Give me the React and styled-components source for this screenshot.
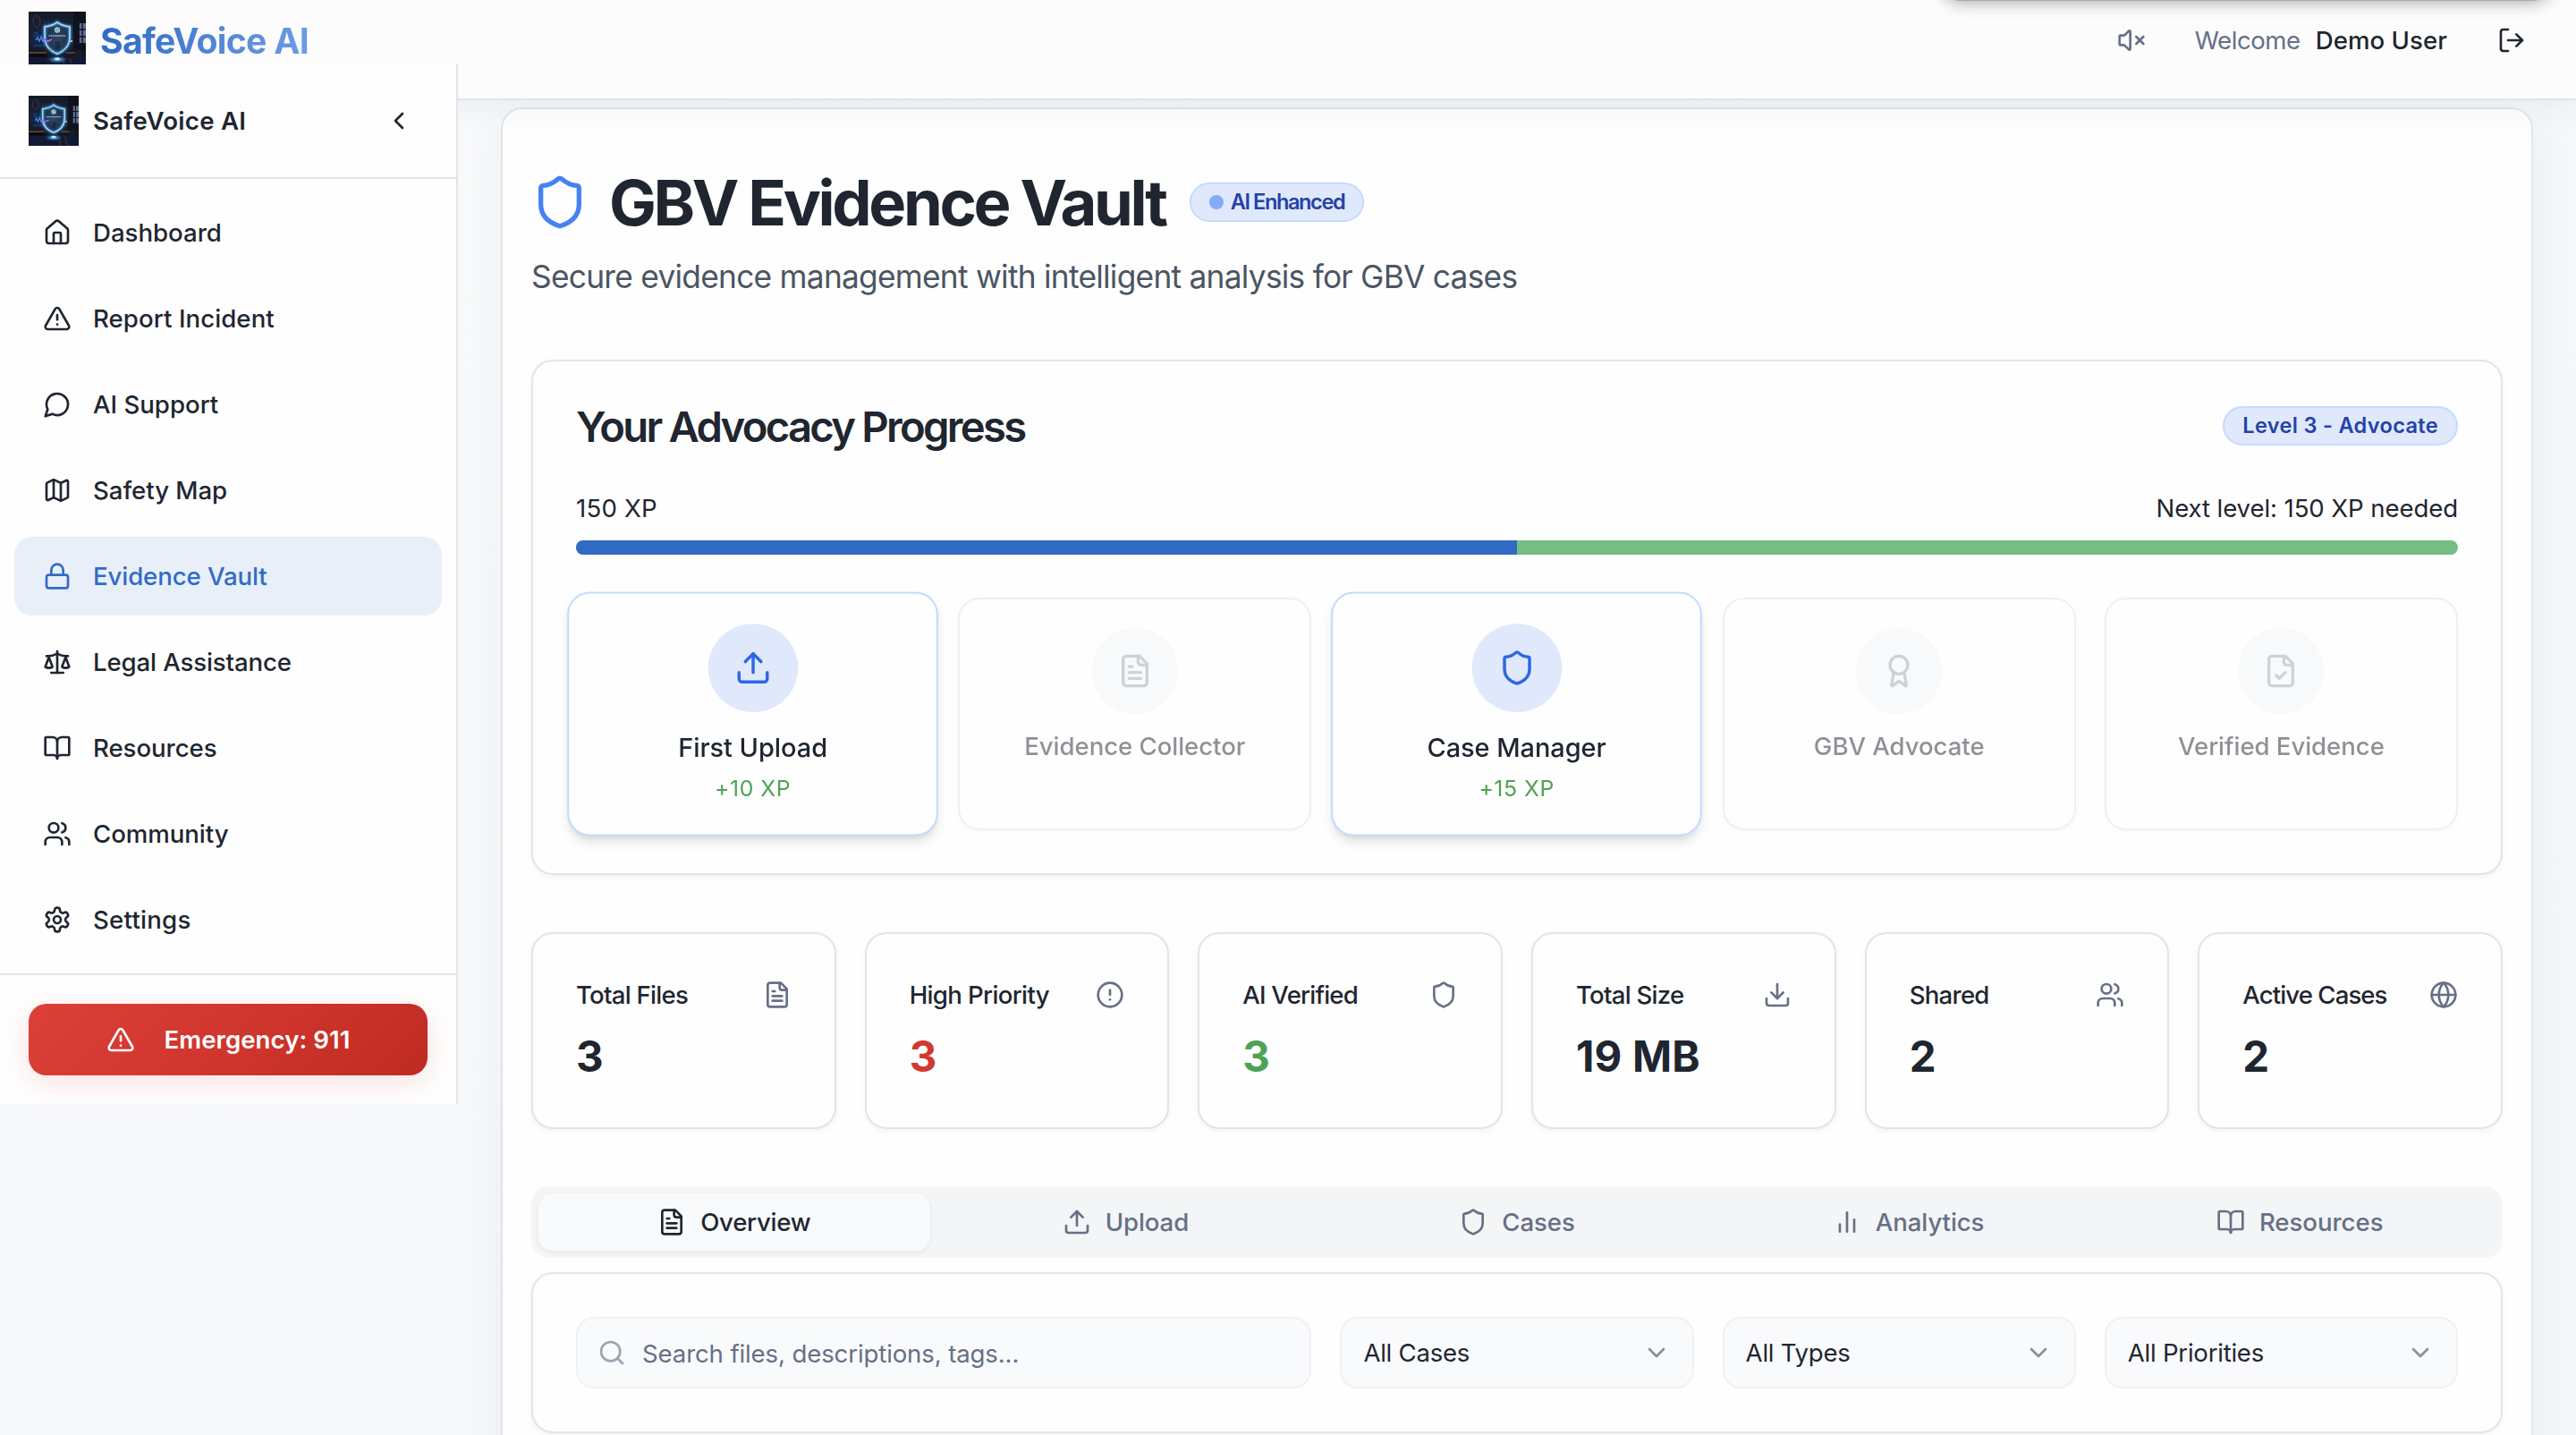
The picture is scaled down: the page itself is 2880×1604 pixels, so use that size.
import React from 'react';
import styled, { createGlobalStyle, css } from 'styled-components';

const GlobalStyle = createGlobalStyle`
  *, *::before, *::after { box-sizing: border-box; }
  html, body { margin: 0; padding: 0; }
  body {
    font-family: Inter, Roboto, "Liberation Sans", sans-serif;
    color: #1f2630;
    background: #f8fafc;
    overflow: hidden;
  }
  h1, h2, p { margin: 0; }
  button, input { font: inherit; color: inherit; }
`;

/* ---------- type scale ---------- */

const regular = 420;
const medium = 540;

const body = css`
  font-size: 27.6px;
  font-weight: ${regular};
  line-height: 40px;
  white-space: nowrap;
  letter-spacing: ${(p) => p.$ls ?? 0}px;
`;

const small = css`
  font-size: 23.6px;
  line-height: 32px;
  white-space: nowrap;
  letter-spacing: ${(p) => p.$ls ?? 0.3}px;
`;

/* ---------- icons ---------- */

const Glyph = styled.svg.attrs({ viewBox: '0 0 24 24', 'aria-hidden': true })`
  flex: none;
  width: ${(p) => p.$size || 32}px;
  height: ${(p) => p.$size || 32}px;
  fill: none;
  stroke: ${(p) => p.$color || 'currentColor'};
  stroke-width: 2;
  stroke-linecap: round;
  stroke-linejoin: round;
  opacity: ${(p) => p.$opacity ?? 1};
`;

const shapes = {
  home: (
    <>
      <path d="M15 21v-8a1 1 0 0 0-1-1h-4a1 1 0 0 0-1 1v8" />
      <path d="M3 10a2 2 0 0 1 .709-1.528l7-5.999a2 2 0 0 1 2.582 0l7 5.999A2 2 0 0 1 21 10v9a2 2 0 0 1-2 2H5a2 2 0 0 1-2-2z" />
    </>
  ),
  alert: (
    <>
      <path d="m21.73 18-8-14a2 2 0 0 0-3.48 0l-8 14A2 2 0 0 0 4 21h16a2 2 0 0 0 1.73-3" />
      <path d="M12 9v4" />
      <path d="M12 17h.01" />
    </>
  ),
  chat: <path d="M7.9 20A9 9 0 1 0 4 16.1L2 22Z" />,
  map: (
    <>
      <path d="M14.106 5.553a2 2 0 0 0 1.788 0l3.659-1.83A1 1 0 0 1 21 4.619v12.764a1 1 0 0 1-.553.894l-4.553 2.277a2 2 0 0 1-1.788 0l-4.212-2.106a2 2 0 0 0-1.788 0l-3.659 1.83A1 1 0 0 1 3 19.381V6.618a1 1 0 0 1 .553-.894l4.553-2.277a2 2 0 0 1 1.788 0z" />
      <path d="M15 5.764v15" />
      <path d="M9 3.236v15" />
    </>
  ),
  lock: (
    <>
      <rect width="18" height="11" x="3" y="11" rx="2" ry="2" />
      <path d="M7 11V7a5 5 0 0 1 10 0v4" />
    </>
  ),
  scale: (
    <>
      <path d="m16 16 3-8 3 8c-.87.65-1.92 1-3 1s-2.13-.35-3-1Z" />
      <path d="m2 16 3-8 3 8c-.87.65-1.92 1-3 1s-2.13-.35-3-1Z" />
      <path d="M7 21h10" />
      <path d="M12 3v18" />
      <path d="M3 7h2c2 0 5-1 7-2 2 1 5 2 7 2h2" />
    </>
  ),
  book: (
    <>
      <path d="M12 7v14" />
      <path d="M3 18a1 1 0 0 1-1-1V4a1 1 0 0 1 1-1h5a4 4 0 0 1 4 4 4 4 0 0 1 4-4h5a1 1 0 0 1 1 1v13a1 1 0 0 1-1 1h-6a3 3 0 0 0-3 3 3 3 0 0 0-3-3z" />
    </>
  ),
  users: (
    <>
      <path d="M16 21v-2a4 4 0 0 0-4-4H6a4 4 0 0 0-4 4v2" />
      <circle cx="9" cy="7" r="4" />
      <path d="M22 21v-2a4 4 0 0 0-3-3.87" />
      <path d="M16 3.13a4 4 0 0 1 0 7.75" />
    </>
  ),
  settings: (
    <>
      <path d="M12.22 2h-.44a2 2 0 0 0-2 2v.18a2 2 0 0 1-1 1.73l-.43.25a2 2 0 0 1-2 0l-.15-.08a2 2 0 0 0-2.73.73l-.22.38a2 2 0 0 0 .73 2.73l.15.1a2 2 0 0 1 1 1.72v.51a2 2 0 0 1-1 1.74l-.15.09a2 2 0 0 0-.73 2.73l.22.38a2 2 0 0 0 2.73.73l.15-.08a2 2 0 0 1 2 0l.43.25a2 2 0 0 1 1 1.73V20a2 2 0 0 0 2 2h.44a2 2 0 0 0 2-2v-.18a2 2 0 0 1 1-1.73l.43-.25a2 2 0 0 1 2 0l.15.08a2 2 0 0 0 2.73-.73l.22-.39a2 2 0 0 0-.73-2.73l-.15-.08a2 2 0 0 1-1-1.74v-.5a2 2 0 0 1 1-1.74l.15-.09a2 2 0 0 0 .73-2.73l-.22-.38a2 2 0 0 0-2.73-.73l-.15.08a2 2 0 0 1-2 0l-.43-.25a2 2 0 0 1-1-1.73V4a2 2 0 0 0-2-2z" />
      <circle cx="12" cy="12" r="3" />
    </>
  ),
  left: <path d="m15 18-6-6 6-6" />,
  down: <path d="m6 9 6 6 6-6" />,
  mute: (
    <>
      <path d="M11 4.702a.705.705 0 0 0-1.203-.498L6.413 7.587A1.4 1.4 0 0 1 5.416 8H3a1 1 0 0 0-1 1v6a1 1 0 0 0 1 1h2.416a1.4 1.4 0 0 1 .997.413l3.383 3.384A.705.705 0 0 0 11 19.298z" />
      <path d="m22 9-6 6" />
      <path d="m16 9 6 6" />
    </>
  ),
  logout: (
    <>
      <path d="M9 21H5a2 2 0 0 1-2-2V5a2 2 0 0 1 2-2h4" />
      <path d="m16 17 5-5-5-5" />
      <path d="M21 12H9" />
    </>
  ),
  shield: (
    <path d="M20 13c0 5-3.5 7.5-7.66 8.95a1 1 0 0 1-.67-.01C7.5 20.5 4 18 4 13V6a1 1 0 0 1 1-1c2 0 4.5-1.2 6.24-2.72a1.17 1.17 0 0 1 1.52 0C14.51 3.81 17 5 19 5a1 1 0 0 1 1 1z" />
  ),
  upload: (
    <>
      <path d="M21 15v4a2 2 0 0 1-2 2H5a2 2 0 0 1-2-2v-4" />
      <path d="m17 8-5-5-5 5" />
      <path d="M12 3v12" />
    </>
  ),
  download: (
    <>
      <path d="M21 15v4a2 2 0 0 1-2 2H5a2 2 0 0 1-2-2v-4" />
      <path d="m7 10 5 5 5-5" />
      <path d="M12 15V3" />
    </>
  ),
  file: (
    <>
      <path d="M15 2H6a2 2 0 0 0-2 2v16a2 2 0 0 0 2 2h12a2 2 0 0 0 2-2V7Z" />
      <path d="M14 2v4a2 2 0 0 0 2 2h4" />
      <path d="M10 9H8" />
      <path d="M16 13H8" />
      <path d="M16 17H8" />
    </>
  ),
  fileCheck: (
    <>
      <path d="M15 2H6a2 2 0 0 0-2 2v16a2 2 0 0 0 2 2h12a2 2 0 0 0 2-2V7Z" />
      <path d="M14 2v4a2 2 0 0 0 2 2h4" />
      <path d="m9 15 2 2 4-4" />
    </>
  ),
  award: (
    <>
      <path d="m15.477 12.89 1.515 8.526a.5.5 0 0 1-.81.47l-3.58-2.687a1 1 0 0 0-1.197 0l-3.586 2.686a.5.5 0 0 1-.81-.469l1.514-8.526" />
      <circle cx="12" cy="8" r="6" />
    </>
  ),
  info: (
    <>
      <circle cx="12" cy="12" r="10" />
      <path d="M12 8v4" />
      <path d="M12 16h.01" />
    </>
  ),
  globe: (
    <>
      <circle cx="12" cy="12" r="10" />
      <path d="M12 2a14.5 14.5 0 0 0 0 20 14.5 14.5 0 0 0 0-20" />
      <path d="M2 12h20" />
    </>
  ),
  bars: (
    <>
      <path d="M18 20V10" />
      <path d="M12 20V4" />
      <path d="M6 20v-6" />
    </>
  ),
  search: (
    <>
      <circle cx="11" cy="11" r="8" />
      <path d="m21 21-4.3-4.3" />
    </>
  ),
};

const Icon = ({ name, size, color, opacity }) => (
  <Glyph $size={size} $color={color} $opacity={opacity}>
    {shapes[name]}
  </Glyph>
);

/* ---------- logo ---------- */

const LogoArt = styled.svg.attrs({ viewBox: '0 0 64 64' })`
  flex: none;
  display: block;
  width: ${(p) => p.$size}px;
  height: ${(p) => p.$size}px;
`;

const shieldPath = 'M32 11.8C28.5 14.8 23 16.2 18 16.8V29C18 37.5 24 44 32 47.2C40 44 46 37.5 46 29V16.8C41 16.2 35.5 14.8 32 11.8Z';

const Logo = ({ size, id }) => (
  <LogoArt $size={size}>
    <defs>
      <linearGradient id={`${id}-wall`} x1="0" y1="0" x2="0" y2="1">
        <stop offset="0" stopColor="#161a2a" />
        <stop offset="0.5" stopColor="#1b2238" />
        <stop offset="0.72" stopColor="#17161f" />
        <stop offset="1" stopColor="#0d1630" />
      </linearGradient>
      <radialGradient id={`${id}-halo`}>
        <stop offset="0" stopColor="#3f6f9c" stopOpacity="0.75" />
        <stop offset="1" stopColor="#24406a" stopOpacity="0" />
      </radialGradient>
      <radialGradient id={`${id}-base`}>
        <stop offset="0" stopColor="#e4fbff" />
        <stop offset="0.3" stopColor="#58b8f2" stopOpacity="0.8" />
        <stop offset="1" stopColor="#1c4fa0" stopOpacity="0" />
      </radialGradient>
      <filter id={`${id}-soft`} x="-20%" y="-20%" width="140%" height="140%">
        <feGaussianBlur stdDeviation="1.3" />
      </filter>
      <clipPath id={`${id}-clip`}>
        <rect width="64" height="64" />
      </clipPath>
    </defs>
    <g clipPath={`url(#${id}-clip)`}>
      <rect width="64" height="64" fill={`url(#${id}-wall)`} />
      <rect x="50" width="14" height="44" fill="#0c0e16" opacity="0.7" />
      <ellipse cx="9" cy="11" rx="4" ry="6.4" fill="#1a1d2b" stroke="#3a3f52" strokeWidth="1" />
      <path d="M18 10v7M22 9v5" stroke="#2f3448" strokeWidth="1.2" />
      <rect x="5" y="21" width="16" height="19" fill="#122544" />
      <path d="M6 24h5M6 27h7M6 38h12" stroke="#25507e" strokeWidth="1" />
      <rect x="56.5" y="13" width="8" height="22" fill="#5b6f8e" />
      <path d="M56 12v24M60 12v24M56 20h8M56 28h8" stroke="#10131d" strokeWidth="1.3" />
      <path d="M0 46h20M42 46h12" stroke="#a06c48" strokeWidth="1.6" opacity="0.6" />
      <rect x="46" y="32" width="3" height="2" fill="#f4dcb2" />
      <rect x="0" y="47" width="20" height="5" fill="#0a0b12" />
      <path d="M52 51V44q4-4 7 0v7z" fill="#171c2a" />
      <rect y="51" width="64" height="13" fill="#111a33" />
      <path d="M46 52l4 12M38 52l3 12" stroke="#6b4b4b" strokeWidth="1.6" opacity="0.4" />
      <ellipse cx="32" cy="30" rx="21" ry="24" fill={`url(#${id}-halo)`} />
      <path d={shieldPath} fill="#22384f" fillOpacity="0.5" />
      <path d={shieldPath} fill="none" stroke="#4fa9ec" strokeWidth="3" filter={`url(#${id}-soft)`} />
      <path d={shieldPath} fill="none" stroke="#b8e8fc" strokeWidth="1.3" />
      <circle cx="32" cy="20.5" r="3.2" fill="#b9dcec" opacity="0.85" />
      <path d="M30 22l4-3" stroke="#4b7592" strokeWidth="0.8" />
      <path d="M22.5 27h19" stroke="#d2e6f2" strokeWidth="1.7" strokeDasharray="1.6 0.5" opacity="0.7" />
      <path d="M30 33v9h5v-9z" fill="#15243a" opacity="0.6" />
      <path d="M8 32l2-3 2 4 2-5 2 5 2-2 3 2 3-1" fill="none" stroke="#3f86f0" strokeWidth="1.5" />
      <path d="M15 31l3 3 4-1 4-2" fill="none" stroke="#c062dd" strokeWidth="1.4" />
      <ellipse cx="32" cy="53.5" rx="12" ry="4.5" fill={`url(#${id}-base)`} />
      <ellipse cx="32" cy="52.5" rx="3" ry="1" fill="#dcf8ff" />
    </g>
  </LogoArt>
);

/* ---------- shell ---------- */

const Shell = styled.div`
  display: flex;
  flex-direction: column;
  width: 2880px;
  height: 1604px;
  overflow: hidden;
  position: relative;
  background: linear-gradient(135deg, #f9fafb 0%, #f6f8fa 50%, #f4f7fa 100%);
`;

const WindowEdge = styled.div`
  position: absolute;
  z-index: 5;
  top: -39px;
  left: 2172px;
  width: 680px;
  height: 40px;
  border-radius: 20px;
  background: #a9a9aa;
  box-shadow: 0 2px 18px rgba(0, 0, 0, 0.32);
`;

const Header = styled.header`
  flex: none;
  position: relative;
  z-index: 1;
  display: flex;
  align-items: center;
  justify-content: space-between;
  height: 132px;
  margin-top: -20px;
  padding: 0 56px 0 32px;
  background: #fcfcfd;
  border-bottom: 2px solid #e1e5ea;
  box-shadow: 0 8px 32px rgba(40, 80, 150, 0.07);
`;

const Brand = styled.div`
  display: flex;
  align-items: center;
  gap: 16px;
`;

const BrandName = styled.span`
  padding-top: 2px;
  font-size: 39.2px;
  font-weight: 700;
  line-height: 56px;
  letter-spacing: -0.7px;
  white-space: nowrap;
  color: transparent;
  background: linear-gradient(90deg, #316bc5, #6e9be4);
  background-clip: text;
  -webkit-background-clip: text;
`;

const HeaderActions = styled.div`
  display: flex;
  align-items: center;
  color: #667085;
`;

const Greeting = styled.div`
  display: flex;
  gap: 17px;
  margin: 0 56px 0 55px;
`;

const GreetingText = styled.span`
  ${body}
  font-weight: ${(p) => (p.$strong ? medium : regular)};
  color: ${(p) => (p.$strong ? '#1f2630' : '#667085')};
`;

const Body = styled.div`
  flex: 1;
  display: flex;
  align-items: flex-start;
  min-height: 0;
`;

/* ---------- sidebar ---------- */

const Sidebar = styled.aside`
  flex: none;
  z-index: 2;
  width: 512px;
  margin-top: -40px;
  background: #fefefe;
  border-right: 2px solid #e1e5ea;
`;

const SidebarHead = styled.div`
  display: flex;
  align-items: center;
  height: 128px;
  padding: 0 48px 0 32px;
  border-bottom: 2px solid #e1e5ea;
`;

const SidebarTitle = styled.span`
  ${body}
  flex: 1;
  margin-left: 16px;
  font-weight: 600;
`;

const NavList = styled.nav`
  display: flex;
  flex-direction: column;
  gap: 8px;
  padding: 16px;
`;

const NavItem = styled.a`
  ${body}
  display: flex;
  align-items: center;
  gap: 24px;
  height: 88px;
  padding: 0 32px;
  border-radius: 20px;
  font-weight: ${medium};
  color: ${(p) => (p.$active ? '#316bc5' : '#1f2630')};
  background: ${(p) => (p.$active ? '#e8eff9' : 'transparent')};
`;

const SidebarFoot = styled.div`
  padding: 32px;
  border-top: 2px solid #e1e5ea;
`;

const EmergencyButton = styled.button`
  ${body}
  display: flex;
  align-items: center;
  justify-content: center;
  gap: 33px;
  width: 446px;
  height: 80px;
  padding: 0;
  border: 0;
  border-radius: 20px;
  font-weight: 600;
  color: #fff;
  background: linear-gradient(135deg, #dc4038, #cd342b 60%, #be2b22);
  box-shadow: 0 8px 30px rgba(220, 60, 50, 0.15);
`;

/* ---------- main ---------- */

const Main = styled.main`
  flex: 1;
  padding: 8px 48px 0;
`;

const Page = styled.div`
  height: 1600px;
  padding: 68px 32px 0;
  background: #fefefe;
  border: 2px solid #e1e5ec;
  border-radius: 24px;
  box-shadow: 0 16px 48px rgba(50, 60, 110, 0.06);
`;

const TitleRow = styled.div`
  display: flex;
  align-items: center;
  height: 72px;
`;

const Title = styled.h1`
  margin: 0 27px 0 23px;
  padding-top: 1px;
  font-size: 70.5px;
  font-weight: 700;
  line-height: 72px;
  letter-spacing: -3.4px;
  white-space: nowrap;
`;

const Pill = styled.span`
  ${small}
  display: flex;
  align-items: center;
  justify-content: center;
  gap: 8px;
  height: 44px;
  padding: 0 20px;
  border: 2px solid #c3dbfe;
  border-radius: 22px;
  background: #dfe9fb;
  color: #2442a8;
  font-weight: 600;
`;

const Dot = styled.i`
  width: 16px;
  height: 16px;
  border-radius: 50%;
  background: #86aaf6;
`;

const Subtitle = styled.p`
  margin: 20px 0 -1px;
  font-size: 35.3px;
  font-weight: ${regular};
  line-height: 56px;
  letter-spacing: -0.74px;
  white-space: nowrap;
  color: #4b5563;
`;

const cardSurface = css`
  background: #fefefe;
  border: 2px solid #e1e5ea;
  border-radius: 24px;
  box-shadow: 0 2px 6px rgba(0, 0, 0, 0.05);
`;

const ProgressCard = styled.section`
  ${cardSurface}
  margin-top: 65px;
  height: 576px;
  padding: 48px;
`;

const SpaceBetween = styled.div`
  display: flex;
  align-items: center;
  justify-content: space-between;
  height: ${(p) => p.$height}px;
`;

const SectionTitle = styled.h2`
  padding-top: 2px;
  font-size: 47.2px;
  font-weight: 600;
  line-height: 48px;
  letter-spacing: -2.73px;
  white-space: nowrap;
`;

const Progress = styled.div`
  display: flex;
  flex-direction: column;
  gap: 16px;
  margin: 48px 0;
`;

const XpLabel = styled.span`
  ${body}
`;

const Track = styled.div`
  height: 16px;
  border-radius: 8px;
  overflow: hidden;
  background: #76bd84;
`;

const Fill = styled.div`
  width: ${(p) => p.$percent}%;
  height: 100%;
  background: #316bc3;
`;

const FiveColumns = styled.div`
  display: grid;
  grid-template-columns: repeat(5, 1fr);
  gap: 32px;
`;

const Achievement = styled.div`
  display: flex;
  flex-direction: column;
  align-items: center;
  height: 260px;
  padding: 32px;
  border: 2px solid #e1e3e7;
  border-radius: 24px;
  background: #fefefe;
  box-shadow: 0 2px 6px rgba(0, 0, 0, 0.05);
  opacity: 0.5;
  ${(p) =>
    p.$unlocked &&
    css`
      opacity: 1;
      transform: scale(1.05);
      border-color: #c3dbfe;
      box-shadow: 0 8px 12px -2px rgba(0, 0, 0, 0.11), 0 4px 8px -4px rgba(0, 0, 0, 0.1);
    `}
`;

const Medal = styled.div`
  display: flex;
  align-items: center;
  justify-content: center;
  width: 96px;
  height: 96px;
  margin-bottom: ${(p) => (p.$unlocked ? 18 : 16)}px;
  border-radius: 50%;
  background: ${(p) => (p.$unlocked ? '#dfe9fb' : '#f3f5f8')};
  color: ${(p) => (p.$unlocked ? '#2f66e6' : '#a0a6b2')};
`;

const AchievementName = styled.span`
  ${body}
  font-weight: ${medium};
`;

const AchievementXp = styled.span`
  ${small}
  margin-top: 8px;
  font-weight: ${regular};
  color: #4fa254;
`;

const Stats = styled.section`
  display: grid;
  grid-template-columns: repeat(6, 1fr);
  gap: 32px;
  margin-top: 64px;
`;

const StatCard = styled.div`
  ${cardSurface}
  height: 220px;
  padding: 48px;
`;

const StatLabel = styled.span`
  ${body}
  font-weight: ${medium};
`;

const StatValue = styled.div`
  margin-top: 17px;
  font-size: 47.4px;
  font-weight: 700;
  line-height: 64px;
  letter-spacing: 0.2px;
  color: ${(p) => p.$color || '#1f2630'};
`;

const Tabs = styled.div`
  display: grid;
  grid-template-columns: repeat(5, 1fr);
  height: 80px;
  margin-top: 64px;
  padding: 8px;
  border-radius: 20px;
  background: #f3f5f7;
`;

const Tab = styled.button`
  ${body}
  display: flex;
  align-items: center;
  justify-content: center;
  gap: 16px;
  padding: 0;
  border: 0;
  border-radius: 16px;
  font-weight: ${medium};
  color: ${(p) => (p.$active ? '#1f2630' : '#667085')};
  background: ${(p) => (p.$active ? '#f9fafc' : 'transparent')};
  box-shadow: ${(p) => (p.$active ? '0 2px 6px rgba(0, 0, 0, 0.06)' : 'none')};
`;

const Filters = styled.section`
  ${cardSurface}
  height: 180px;
  margin-top: 16px;
  padding: 48px;
`;

const field = css`
  display: flex;
  align-items: center;
  height: 80px;
  border: 2px solid #eff1f4;
  border-radius: 20px;
  background: #f9fafc;
`;

const SearchField = styled.label`
  ${field}
  grid-column: span 2;
  gap: 18px;
  padding: 0 22px;
`;

const SearchInput = styled.input`
  ${body}
  flex: 1;
  padding: 2px 0 0;
  border: 0;
  outline: 0;
  background: transparent;
  &::placeholder {
    color: #667085;
    opacity: 1;
  }
`;

const SelectField = styled.div`
  ${field}
  ${body}
  justify-content: space-between;
  padding: 0 24px;
`;

/* ---------- data ---------- */

const navItems = [
  ['home', 'Dashboard', 0],
  ['alert', 'Report Incident', 0.08],
  ['chat', 'AI Support', 0],
  ['map', 'Safety Map', -0.05],
  ['lock', 'Evidence Vault', -0.1],
  ['scale', 'Legal Assistance', -0.12],
  ['book', 'Resources', -0.05],
  ['users', 'Community', -0.05],
  ['settings', 'Settings', 0.25],
];

const achievements = [
  { icon: 'upload', name: 'First Upload', xp: '+10 XP' },
  { icon: 'file', name: 'Evidence Collector' },
  { icon: 'shield', name: 'Case Manager', xp: '+15 XP' },
  { icon: 'award', name: 'GBV Advocate' },
  { icon: 'fileCheck', name: 'Verified Evidence' },
];

const stats = [
  { label: 'Total Files', value: '3', icon: 'file', ls: -0.75 },
  { label: 'High Priority', value: '3', icon: 'info', color: '#cf3a32', ls: -0.65 },
  { label: 'AI Verified', value: '3', icon: 'shield', color: '#4da355', ls: -0.8 },
  { label: 'Total Size', value: '19 MB', icon: 'download', ls: -0.75 },
  { label: 'Shared', value: '2', icon: 'users', ls: -0.75 },
  { label: 'Active Cases', value: '2', icon: 'globe', ls: -0.93 },
];

const tabs = [
  ['file', 'Overview', -0.25],
  ['upload', 'Upload', -0.1],
  ['shield', 'Cases', -0.1],
  ['bars', 'Analytics', -0.1],
  ['book', 'Resources', -0.05],
];

export default function App() {
  return (
    <>
      <GlobalStyle />
      <Shell>
        <WindowEdge />
        <Header>
          <Brand>
            <Logo size={64} id="top" />
            <BrandName>SafeVoice AI</BrandName>
          </Brand>
          <HeaderActions>
            <Icon name="mute" />
            <Greeting>
              <GreetingText $ls={-0.45}>Welcome</GreetingText>
              <GreetingText $strong $ls={0.05}>Demo User</GreetingText>
            </Greeting>
            <Icon name="logout" color="#1f2630" />
          </HeaderActions>
        </Header>

        <Body>
          <Sidebar>
            <SidebarHead>
              <Logo size={56} id="side" />
              <SidebarTitle $ls={0.25}>SafeVoice AI</SidebarTitle>
              <Icon name="left" />
            </SidebarHead>
            <NavList>
              {navItems.map(([icon, label, ls]) => (
                <NavItem key={label} $active={label === 'Evidence Vault'} $ls={ls}>
                  <Icon name={icon} />
                  {label}
                </NavItem>
              ))}
            </NavList>
            <SidebarFoot>
              <EmergencyButton $ls={0.05}>
                <Icon name="alert" />
                Emergency: 911
              </EmergencyButton>
            </SidebarFoot>
          </Sidebar>

          <Main>
            <Page>
              <TitleRow>
                <Icon name="shield" size={64} color="#4683f0" />
                <Title>GBV Evidence Vault</Title>
                <Pill $ls={-1.42}>
                  <Dot />
                  AI Enhanced
                </Pill>
              </TitleRow>
              <Subtitle>Secure evidence management with intelligent analysis for GBV cases</Subtitle>

              <ProgressCard>
                <SpaceBetween $height={48}>
                  <SectionTitle>Your Advocacy Progress</SectionTitle>
                  <Pill $ls={0.3}>Level 3 - Advocate</Pill>
                </SpaceBetween>
                <Progress>
                  <SpaceBetween $height={40}>
                    <XpLabel $ls={0.2}>150 XP</XpLabel>
                    <XpLabel $ls={-0.1}>Next level: 150 XP needed</XpLabel>
                  </SpaceBetween>
                  <Track>
                    <Fill $percent={50} />
                  </Track>
                </Progress>
                <FiveColumns>
                  {achievements.map((a) => (
                    <Achievement key={a.name} $unlocked={Boolean(a.xp)}>
                      <Medal $unlocked={Boolean(a.xp)}>
                        <Icon name={a.icon} size={40} />
                      </Medal>
                      <AchievementName $ls={-0.06}>{a.name}</AchievementName>
                      {a.xp && <AchievementXp $ls={0.5}>{a.xp}</AchievementXp>}
                    </Achievement>
                  ))}
                </FiveColumns>
              </ProgressCard>

              <Stats>
                {stats.map((s) => (
                  <StatCard key={s.label}>
                    <SpaceBetween $height={40}>
                      <StatLabel $ls={s.ls}>{s.label}</StatLabel>
                      <Icon name={s.icon} color="#667085" />
                    </SpaceBetween>
                    <StatValue $color={s.color}>{s.value}</StatValue>
                  </StatCard>
                ))}
              </Stats>

              <Tabs>
                {tabs.map(([icon, label, ls], i) => (
                  <Tab key={label} $active={i === 0} $ls={ls}>
                    <Icon name={icon} />
                    {label}
                  </Tab>
                ))}
              </Tabs>

              <Filters>
                <FiveColumns>
                  <SearchField>
                    <Icon name="search" color="#9ca3af" />
                    <SearchInput placeholder="Search files, descriptions, tags..." $ls={-0.13} />
                  </SearchField>
                  {['All Cases', 'All Types', 'All Priorities'].map((label) => (
                    <SelectField key={label} $ls={-0.25}>
                      {label}
                      <Icon name="down" opacity={0.5} />
                    </SelectField>
                  ))}
                </FiveColumns>
              </Filters>
            </Page>
          </Main>
        </Body>
      </Shell>
    </>
  );
}
